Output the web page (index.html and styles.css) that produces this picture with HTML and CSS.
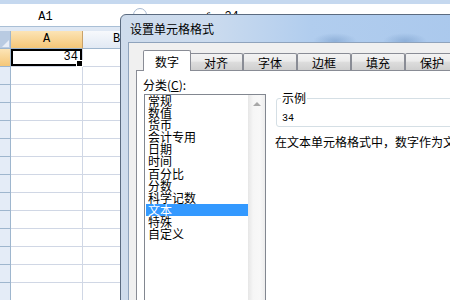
FILE: index.html
```html
<!DOCTYPE html>
<html lang="zh-CN">
<head>
    <meta charset="UTF-8">
    <title>设置单元格格式</title>
    <link rel="stylesheet" href="styles.css">
</head>
<body>
    <div class="excel">
        <div class="top-strip"></div>
        <div class="formula-bar">
            <div class="name-box">A1</div>
            <div class="fx-area">
                <span class="expander"></span>
                <span class="fx">fx</span>
                <span class="formula">34</span>
            </div>
        </div>
        <div class="header-gap"></div>

        <!-- sheet grid: row header, A, B, C -->
        <div class="sheet">
            <div class="corner"></div><div class="col-head selected">A</div><div class="col-head">B</div><div class="col-head">C</div>
            <div class="row-head selected"></div><div class="cell active">34</div><div class="cell"></div><div class="cell"></div>
            <div class="row-head"></div><div class="cell"></div><div class="cell"></div><div class="cell"></div>
            <div class="row-head"></div><div class="cell"></div><div class="cell"></div><div class="cell"></div>
            <div class="row-head"></div><div class="cell"></div><div class="cell"></div><div class="cell"></div>
            <div class="row-head"></div><div class="cell"></div><div class="cell"></div><div class="cell"></div>
            <div class="row-head"></div><div class="cell"></div><div class="cell"></div><div class="cell"></div>
            <div class="row-head"></div><div class="cell"></div><div class="cell"></div><div class="cell"></div>
            <div class="row-head"></div><div class="cell"></div><div class="cell"></div><div class="cell"></div>
            <div class="row-head"></div><div class="cell"></div><div class="cell"></div><div class="cell"></div>
            <div class="row-head"></div><div class="cell"></div><div class="cell"></div><div class="cell"></div>
            <div class="row-head"></div><div class="cell"></div><div class="cell"></div><div class="cell"></div>
            <div class="row-head"></div><div class="cell"></div><div class="cell"></div><div class="cell"></div>
            <div class="row-head"></div><div class="cell"></div><div class="cell"></div><div class="cell"></div>
            <div class="row-head"></div><div class="cell"></div><div class="cell"></div><div class="cell"></div>
        </div>
    </div>

    <div class="dialog">
        <div class="dlg-title">设置单元格格式</div>
        <div class="dlg-client">
            <div class="tabs">
                <div class="tab active">数字</div>
                <div class="tab">对齐</div>
                <div class="tab">字体</div>
                <div class="tab">边框</div>
                <div class="tab">填充</div>
                <div class="tab">保护</div>
            </div>
            <div class="tab-page">
                <div class="category">
                    <div class="label">分类(<u>C</u>):</div>
                    <div class="listbox">
                        <ul class="items">
                            <li>常规</li>
                            <li>数值</li>
                            <li>货币</li>
                            <li>会计专用</li>
                            <li>日期</li>
                            <li>时间</li>
                            <li>百分比</li>
                            <li>分数</li>
                            <li>科学记数</li>
                            <li class="selected">文本</li>
                            <li>特殊</li>
                            <li>自定义</li>
                        </ul>
                        <div class="scrollbar"><span class="arrow-up"></span></div>
                    </div>
                </div>
                <div class="detail">
                    <fieldset class="sample">
                        <legend>示例</legend>
                        <div class="sample-value">34</div>
                    </fieldset>
                    <p class="hint">在文本单元格格式中，数字作为文本处理。单元格显示的内容与输入的内容完全一致。</p>
                </div>
            </div>
        </div>
    </div>
</body>
</html>
```

FILE: styles.css
```css
* {
    box-sizing: border-box;
}

body {
    margin: 0;
    width: 450px;
    height: 300px;
    overflow: hidden;
    position: relative;
    background: #fff;
    color: #000;
    font-family: "Noto Sans CJK SC", sans-serif;
    font-size: 12px;
}

/* excel window behind the dialog */

.top-strip {
    height: 4px;
    background: #c5d8ef;
}

.formula-bar {
    display: flex;
    height: 23px;
    background: #fff;
    border-bottom: 1px solid #a9bfd6;
}

.name-box {
    width: 91px;
    padding-top: 4px;
    line-height: 18px;
    text-align: center;
    font-family: "Liberation Mono", monospace;
    font-size: 12px;
}

.fx-area {
    display: flex;
    align-items: flex-start;
    padding-top: 4px;
}

.expander {
    width: 14px;
    height: 16px;
    margin-left: 42px;
    border: 1px solid #a7b9d1;
    border-radius: 7px;
}

.fx {
    margin-left: 58px;
    font-family: "Liberation Serif", serif;
    font-style: italic;
    font-size: 13px;
    line-height: 18px;
}

.formula {
    margin-left: 10px;
    font-family: "Liberation Mono", monospace;
    line-height: 18px;
}

.header-gap {
    height: 4px;
    background: #dfe8f4;
}

.sheet {
    display: grid;
    grid-template-columns: 11px 72px 68px 80px;
    grid-auto-rows: 18px;
    font-family: "Liberation Mono", monospace;
    font-size: 12px;
}

.sheet > div {
    border-right: 1px solid #d0d7e5;
    border-bottom: 1px solid #d0d7e5;
}

.corner {
    position: relative;
    background: #b9cbe2;
    border-color: #9eb6ce !important;
}

.corner::after {
    content: "";
    position: absolute;
    right: 1px;
    bottom: 1px;
    border-left: 7px solid transparent;
    border-bottom: 7px solid #e8eef7;
}

.col-head {
    line-height: 17px;
    text-align: center;
    background: linear-gradient(#f7f9fc, #e1e9f4);
    border-color: #9eb6ce !important;
}

.col-head.selected {
    background: linear-gradient(#fce4b6, #f5c778);
    border-right-color: #c9a26a !important;
}

.row-head {
    background: #e4ecf7;
    border-color: #9eb6ce !important;
}

.row-head.selected {
    background: linear-gradient(#fce4b6, #f5c778);
}

.cell.active {
    position: relative;
    padding-right: 4px;
    line-height: 17px;
    text-align: right;
    box-shadow: inset 0 0 0 2px #000;
}

.cell.active::after {
    content: "";
    position: absolute;
    right: -1px;
    bottom: -1px;
    width: 5px;
    height: 5px;
    background: #000;
    border: 1px solid #fff;
}

/* format cells dialog */

.dialog {
    position: absolute;
    left: 120px;
    top: 14px;
    width: 420px;
    height: 300px;
    padding: 0 7px;
    border: 1px solid #5b6b80;
    border-radius: 6px 6px 0 0;
    background:
        radial-gradient(ellipse 22px 8px at 214px 26px, rgba(95, 135, 185, 0.4), transparent),
        radial-gradient(ellipse 22px 8px at 284px 26px, rgba(95, 135, 185, 0.4), transparent),
        linear-gradient(to right, #cfdcec 0, #cbdbee 90px, #b1cdee 190px, #a7c6ec 100%);
}

.dlg-title {
    height: 27px;
    padding-left: 2px;
    line-height: 27px;
}

.dlg-client {
    height: 270px;
    border: 1px solid #8fa3bc;
    background: #f0f0f0;
}

.tabs {
    display: flex;
    align-items: flex-end;
    height: 27px;
    padding-left: 14px;
}

.tab {
    width: 54px;
    height: 17px;
    padding-top: 1px;
    line-height: 15px;
    text-align: center;
    border: 1px solid #898c95;
    border-bottom: none;
    border-radius: 2px 2px 0 0;
    background: linear-gradient(#f3f3f3, #ebebeb 45%, #dddddd 50%, #cfcfcf);
}

.tab.active {
    position: relative;
    z-index: 1;
    width: 48px;
    height: 21px;
    margin-right: -2px;
    margin-bottom: -1px;
    padding-top: 0;
    line-height: 21px;
    background: #fff;
}

.tab-page {
    display: flex;
    height: 240px;
    margin-left: 7px;
    padding: 7px 0 0 6px;
    border: 1px solid #898c95;
    background: #fff;
}

.label {
    line-height: 14px;
}

.listbox {
    display: flex;
    width: 122px;
    height: 220px;
    margin: 2px 0 0 1px;
    border: 1px solid #828790;
}

.items {
    flex: 1;
    margin: 0;
    padding: 0;
    list-style: none;
}

.items li {
    margin-left: 1px;
    padding-left: 2px;
    line-height: 12.1px;
    white-space: nowrap;
}

.items li.selected {
    background: #3399ff;
    color: #fff;
}

.scrollbar {
    width: 17px;
    background: linear-gradient(to right, #e6e6e6, #f6f6f6 30%, #f8f8f8 70%, #ededed);
}

.arrow-up {
    display: block;
    width: 0;
    height: 0;
    margin: 7px auto 0;
    border-left: 4px solid transparent;
    border-right: 4px solid transparent;
    border-bottom: 4px solid #a8a8a8;
}

.detail {
    margin-left: 9px;
    white-space: nowrap;
}

.sample {
    width: 200px;
    min-width: 0;
    margin: 14px 0 0 1px;
    padding: 0 4px 2px;
    border: 1px solid #d5dfe5;
    border-radius: 3px;
}

.sample legend {
    padding: 0 1px;
    line-height: 12px;
}

.sample-value {
    margin: 9px 0 0 1px;
    font-family: "Liberation Mono", monospace;
    font-size: 10px;
    line-height: 11px;
}

.hint {
    margin: 8px 0 0;
    line-height: 14px;
}
```
